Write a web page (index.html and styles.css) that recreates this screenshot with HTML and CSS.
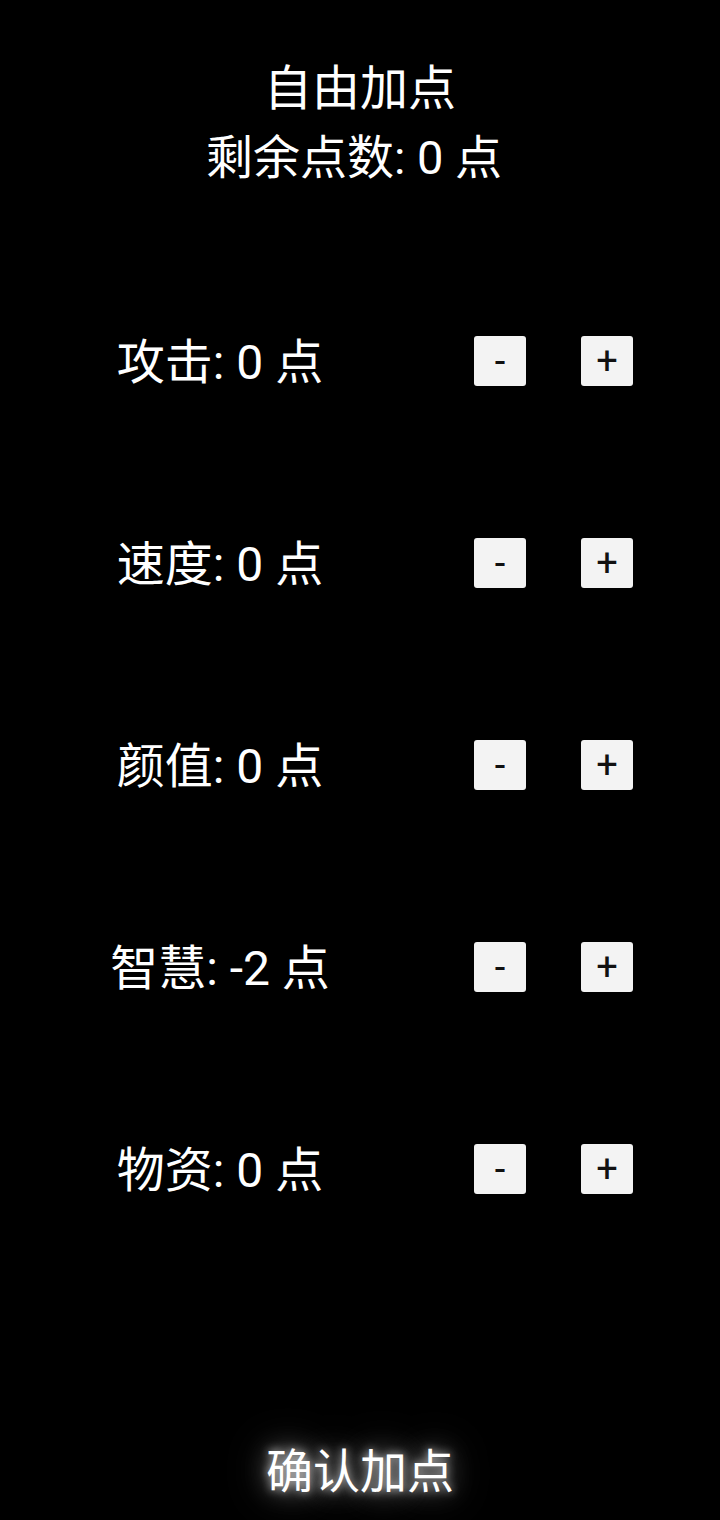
FILE: index.html
```html
<!DOCTYPE html>
<html lang="zh">
<head>
<meta charset="utf-8">
<link rel="stylesheet" href="styles.css">
</head>
<body>
<div class="page">
  <header class="header">
    <div class="title">自由加点</div>
    <div class="remain">剩余点数: 0 点</div>
  </header>
  <main class="rows">
    <div class="row"><div class="label">攻击: 0 点</div><button class="btn minus">-</button><button class="btn plus">+</button></div>
    <div class="row"><div class="label">速度: 0 点</div><button class="btn minus">-</button><button class="btn plus">+</button></div>
    <div class="row"><div class="label">颜值: 0 点</div><button class="btn minus">-</button><button class="btn plus">+</button></div>
    <div class="row"><div class="label">智慧: -2 点</div><button class="btn minus">-</button><button class="btn plus">+</button></div>
    <div class="row"><div class="label">物资: 0 点</div><button class="btn minus">-</button><button class="btn plus">+</button></div>
  </main>
  <footer class="footer">
    <div class="confirm">确认加点</div>
  </footer>
</div>
</body>
</html>
```
FILE: styles.css
```css
html, body {
  margin: 0;
  padding: 0;
  background: #000;
}
body {
  width: 720px;
  height: 1520px;
  overflow: hidden;
  font-family: Roboto, "Noto Sans CJK SC", sans-serif;
  color: #fff;
}
.page {
  display: flex;
  flex-direction: column;
}
.header {
  padding-top: 54px;
  text-align: center;
  font-size: 48px;
  line-height: 69px;
}
.remain {
  font-size: 47px;
  padding-right: 12px;
}
.rows {
  margin-top: 68px;
  display: flex;
  flex-direction: column;
}
.row {
  height: 202px;
  display: flex;
  align-items: center;
}
.label {
  width: 440px;
  text-align: center;
  font-size: 48px;
  line-height: 69px;
  padding-top: 3px;
}
.btn {
  width: 52px;
  height: 50px;
  padding: 0;
  border: none;
  border-radius: 3px;
  background: #f3f3f3;
  color: #111;
  font-family: Roboto, sans-serif;
  font-size: 38px;
  font-weight: 400;
  line-height: 50px;
}
.minus {
  margin-left: 34px;
}
.plus {
  margin-left: 55px;
}
.footer {
  margin-top: 167px;
  text-align: center;
}
.confirm {
  display: inline-block;
  font-size: 47px;
  line-height: 69px;
  text-shadow: 0 0 10px rgba(255,255,255,0.8), 0 0 26px rgba(255,255,255,0.5), 0 0 44px rgba(255,255,255,0.35);
}
```
